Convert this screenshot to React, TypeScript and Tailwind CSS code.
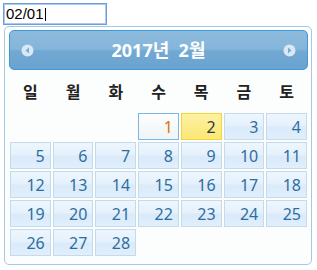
const WEEK = ["일", "월", "화", "수", "목", "금", "토"];

function CircleArrow({ dir }: { dir: "w" | "e" }) {
    return (
        <svg width="13" height="13" viewBox="0 0 13 13">
            <circle cx="6.5" cy="6.5" r="6" fill="#d9e8f4" />
            {dir === "w" ? (
                <polygon points="8,3.5 8,9.5 4.5,6.5" fill="#78acd5" />
            ) : (
                <polygon points="5,3.5 5,9.5 8.5,6.5" fill="#78acd5" />
            )}
        </svg>
    );
}

function DayCell({ day }: { day: number }) {
    const base = "h-[27px] flex items-center justify-end pr-[5px] border text-[16px] font-['Noto_Sans',sans-serif]";
    if (day === 1) {
        return (
            <div className={`${base} border-[#79b7e7] text-[#e17009] bg-[linear-gradient(to_bottom,#fdfefe_0%,#f6f9fa_50%,#eff4f6_100%)]`}>
                {day}
            </div>
        );
    }
    if (day === 2) {
        return (
            <div className={`${base} border-[#fad42e] text-[#363636] bg-[linear-gradient(to_bottom,#fcf1a4_0%,#fbec8c_50%,#fbe878_100%)]`}>
                {day}
            </div>
        );
    }
    return (
        <div className={`${base} border-[#c5dbec] text-[#2e6e9e] bg-[linear-gradient(to_bottom,#edf6fe_0%,#e6f1fc_45%,#d9eafa_55%,#e1effc_100%)]`}>
            {day}
        </div>
    );
}

export default function App() {
    const days = Array.from({ length: 28 }, (_, i) => i + 1);

    return (
        <div className="w-[317px] h-[270px] bg-white overflow-hidden pt-[3px]">
            <div className="ml-[3px] w-[104px] h-[22px] border border-[#6c9edc] shadow-[inset_0_0_0_1px_#abc8ee] flex items-center pl-[2px] font-['Liberation_Sans',sans-serif] text-[15px] text-black">
                <span>02/01</span>
                <span className="w-[1px] h-[13px] bg-black ml-[1px]" />
            </div>

            <div className="ml-[4px] mt-[1px] w-[308px] h-[239px] border border-[#a6c9e2] rounded-[5px] bg-[#fcfdfd] pt-[3px] pl-[4px]">
                <div className="w-[299px] h-[40px] rounded-[5px] border border-[#4297d7] bg-[linear-gradient(to_bottom,#8dbbdd_0%,#84b5da_48%,#72a9d3_52%,#6aa3d0_100%)] flex items-center justify-between px-[11px]">
                    <CircleArrow dir="w" />
                    <div className="text-white font-bold text-[18px] font-['Noto_Sans','Noto_Sans_CJK_KR',sans-serif] whitespace-pre">
                        2017년  2월
                    </div>
                    <CircleArrow dir="e" />
                </div>

                <div className="ml-[1px] w-[297px] grid grid-cols-7 gap-x-[2px] h-[43px] items-center pb-[1px]">
                    {WEEK.map((w) => (
                        <div key={w} className="text-center font-bold text-[16px] text-[#222222] font-['Noto_Sans_CJK_KR',sans-serif]">
                            {w}
                        </div>
                    ))}
                </div>

                <div className="ml-[1px] w-[297px] grid grid-cols-7 gap-[2px]">
                    <div />
                    <div />
                    <div />
                    {days.map((d) => (
                        <DayCell key={d} day={d} />
                    ))}
                </div>
            </div>
        </div>
    );
}
